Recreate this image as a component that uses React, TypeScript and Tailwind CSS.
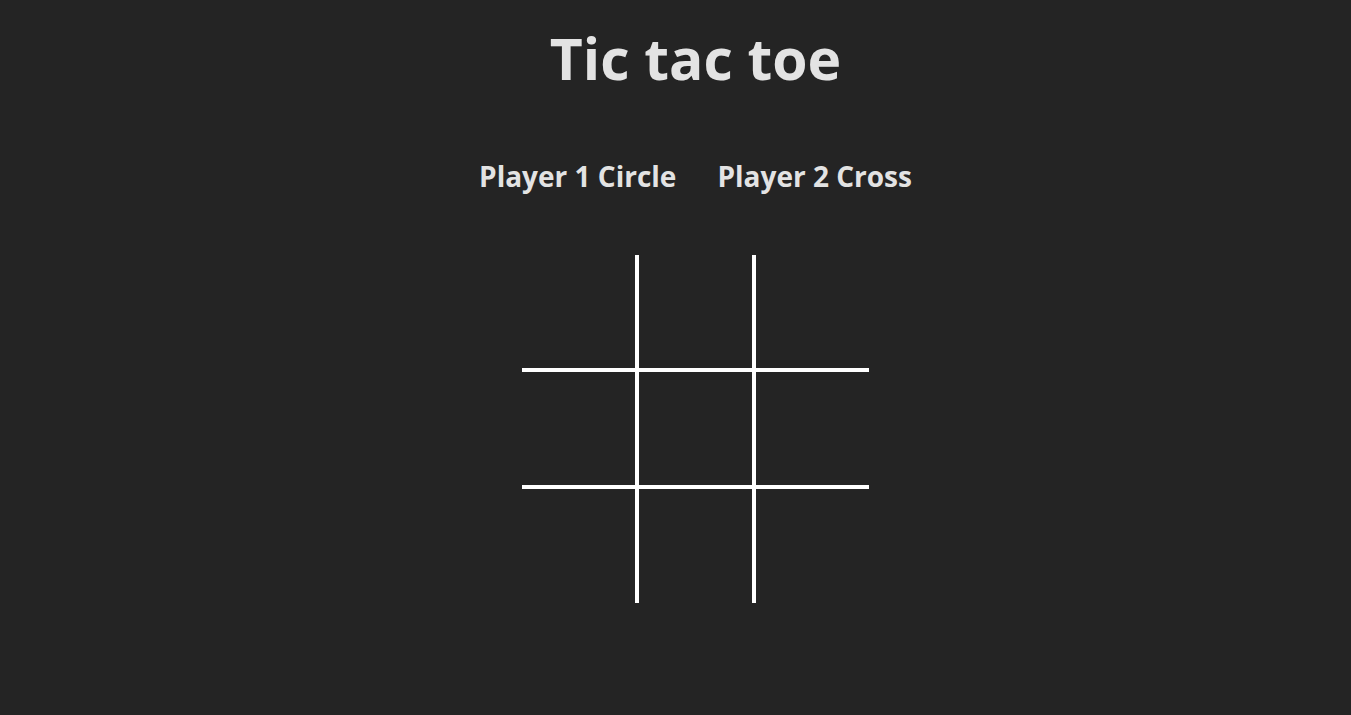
import { FC } from "react";

const cellBorders = [
  "border-r-4 border-b-4",
  "border-b-4",
  "border-l-4 border-b-4",
  "border-r-4",
  "",
  "border-l-4",
  "border-r-4 border-t-4",
  "border-t-4",
  "border-l-4 border-t-4",
];

const Board: FC = () => {
  return (
    <div className="grid grid-cols-[117px_113px_117px] grid-rows-[117px_113px_118px]">
      {cellBorders.map((b, i) => (
        <div key={i} className={`border-white ${b}`} />
      ))}
    </div>
  );
};

export default function App() {
  return (
    <div
      className="min-h-[715px] w-full bg-[#242424] text-[#e3e3e3] flex flex-col items-center pl-[40px]"
      style={{ fontFamily: '"Open Sans", "Noto Sans", sans-serif' }}
    >
      <h1 className="mt-[27px] text-[57px] leading-[1.1] font-bold">Tic tac toe</h1>
      <div className="mt-[70px] flex gap-[41px] text-[28px] font-bold leading-[1.2]">
        <h2>Player 1 Circle</h2>
        <h2>Player 2 Cross</h2>
      </div>
      <div className="mt-[62px]">
        <Board />
      </div>
    </div>
  );
}
